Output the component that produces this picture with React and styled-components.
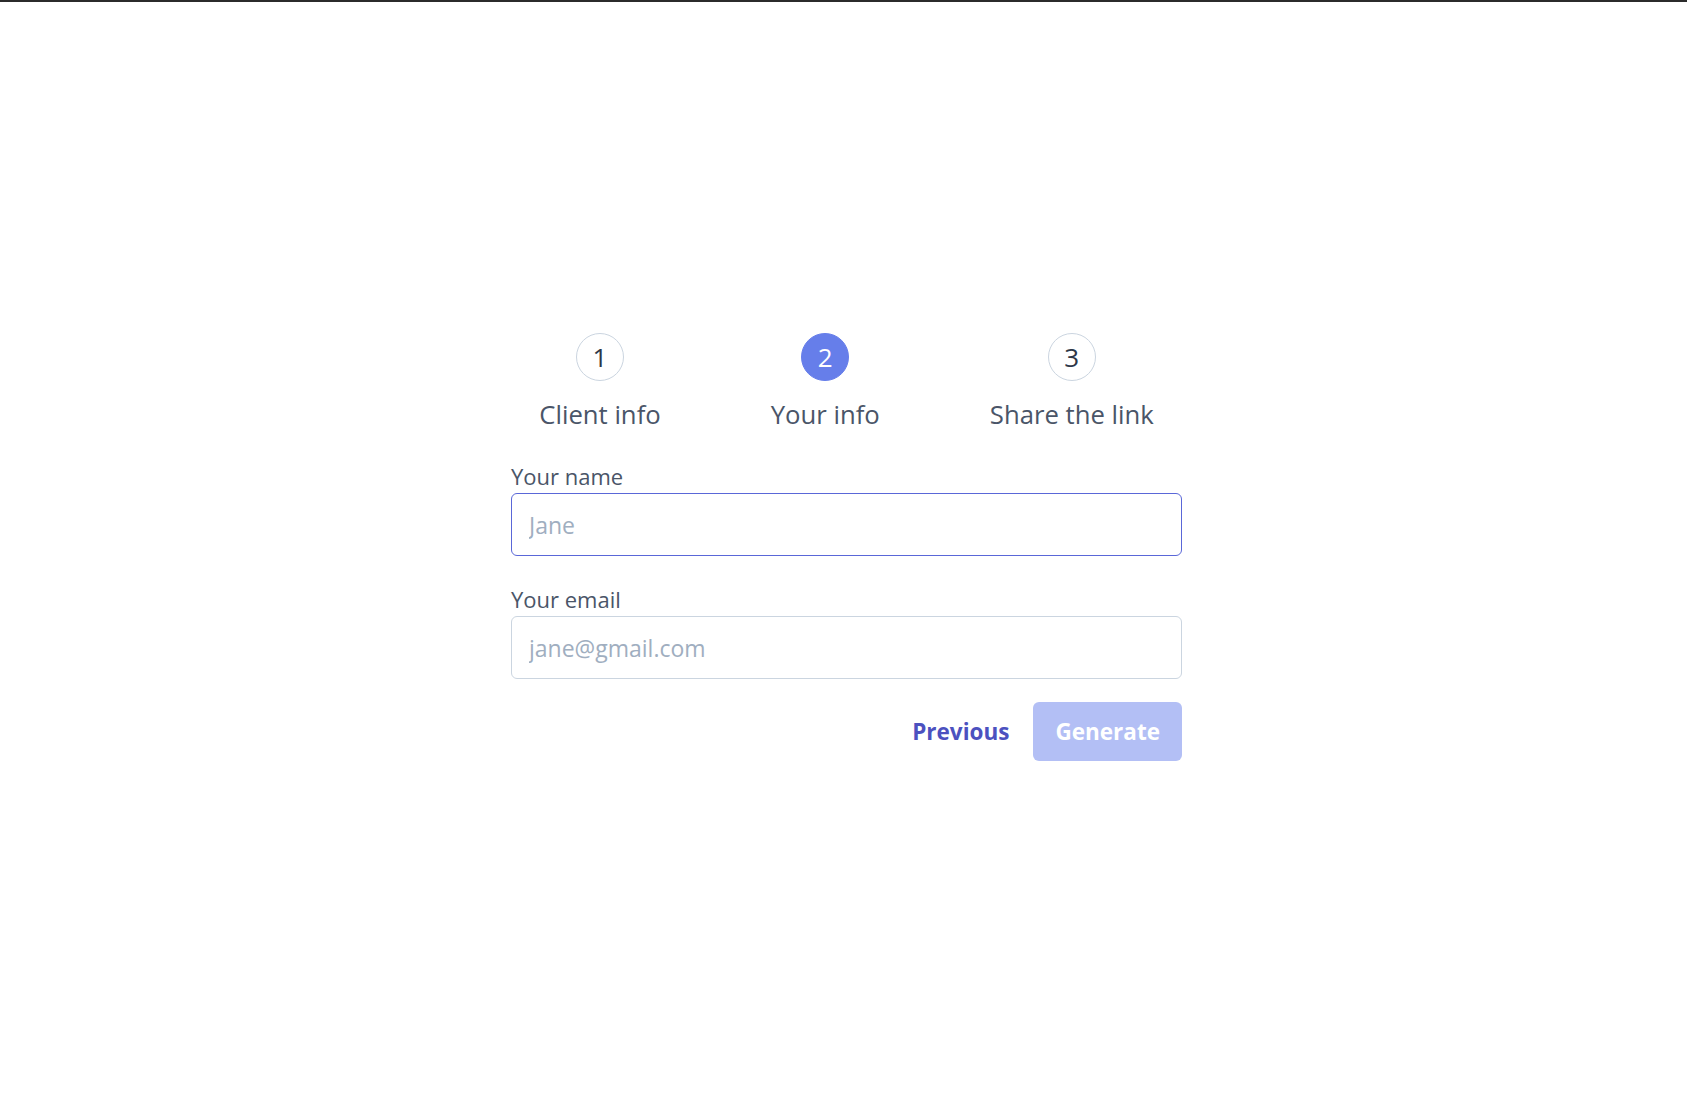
import React, { useState } from "react";
import styled, { createGlobalStyle } from "styled-components";

const GlobalStyle = createGlobalStyle`
  * { box-sizing: border-box; }
  body {
    margin: 0;
    background: #ffffff;
    font-family: "Open Sans", "Noto Sans", Arial, sans-serif;
    color: #4a5568;
  }
`;

const TopEdge = styled.div`
  height: 2px;
  background: #2b2b2b;
`;

const Page = styled.div`
  display: flex;
  justify-content: center;
  padding-top: 331px;
  padding-left: 6px;
  min-height: 1111px;
`;

const Wizard = styled.div`
  width: 671px;
  display: flex;
  flex-direction: column;
`;

const Steps = styled.div`
  display: flex;
  justify-content: center;
  gap: 110px;
  margin-bottom: 26px;
`;

const Step = styled.div`
  display: flex;
  flex-direction: column;
  align-items: center;
`;

const Circle = styled.div`
  width: 48px;
  height: 48px;
  border-radius: 50%;
  display: flex;
  align-items: center;
  justify-content: center;
  font-size: 26px;
  line-height: 1;
  border: 1px solid ${(p) => (p.$active ? "#667eea" : "#cbd5e0")};
  background: ${(p) => (p.$active ? "#667eea" : "#ffffff")};
  color: ${(p) => (p.$active ? "#ffffff" : "#2d3748")};
`;

const StepLabel = styled.div`
  margin-top: 15px;
  font-size: 25.7px;
  line-height: 38px;
  color: #4a5568;
  white-space: nowrap;
`;

const Field = styled.div`
  display: flex;
  flex-direction: column;
  margin-bottom: ${(p) => p.$gap}px;
`;

const Label = styled.label`
  font-size: 22px;
  line-height: 33px;
  color: #4a5568;
`;

const Input = styled.input`
  height: 63px;
  width: 100%;
  padding: 0 17px;
  font-family: inherit;
  font-size: 23px;
  color: #2d3748;
  border-radius: 6px;
  border: 1px solid ${(p) => (p.$focused ? "#5a67d8" : "#cbd5e0")};
  outline: none;
  background: #fff;

  &::placeholder {
    color: #a0aec0;
  }
`;

const Actions = styled.div`
  display: flex;
  justify-content: flex-end;
`;

const Button = styled.button`
  height: 59px;
  padding: 0 ${(p) => (p.$primary ? 22 : 24)}px;
  border: none;
  border-radius: 6px;
  font-family: inherit;
  font-size: 22.5px;
  font-weight: 700;
  cursor: pointer;
  background: ${(p) => (p.$primary ? "#b3bff5" : "transparent")};
  color: ${(p) => (p.$primary ? "#ffffff" : "#4c51bf")};
`;

const steps = ["Client info", "Your info", "Share the link"];

export default function App() {
  const [current] = useState(1);
  const [name, setName] = useState("");
  const [email, setEmail] = useState("");

  return (
    <>
      <GlobalStyle />
      <TopEdge />
      <Page>
        <Wizard>
          <Steps>
            {steps.map((label, i) => (
              <Step key={label}>
                <Circle $active={i === current}>{i + 1}</Circle>
                <StepLabel>{label}</StepLabel>
              </Step>
            ))}
          </Steps>
          <Field $gap={27}>
            <Label>Your name</Label>
            <Input
              $focused
              placeholder="Jane"
              value={name}
              onChange={(e) => setName(e.target.value)}
            />
          </Field>
          <Field $gap={23}>
            <Label>Your email</Label>
            <Input
              placeholder="jane@gmail.com"
              value={email}
              onChange={(e) => setEmail(e.target.value)}
            />
          </Field>
          <Actions>
            <Button>Previous</Button>
            <Button $primary>Generate</Button>
          </Actions>
        </Wizard>
      </Page>
    </>
  );
}
